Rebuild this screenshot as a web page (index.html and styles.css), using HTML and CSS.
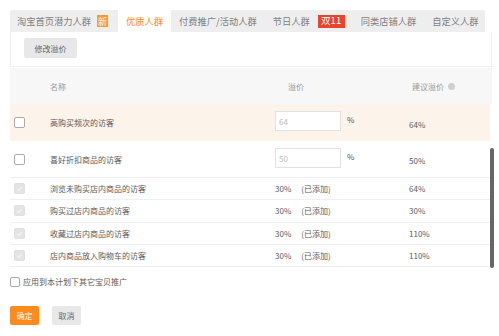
FILE: index.html
```html
<!DOCTYPE html>
<html>
<head>
<meta charset="utf-8">
<link rel="stylesheet" href="styles.css">
</head>
<body>
<div class="page">
  <div class="tabs">
    <div class="tab first">淘宝首页潜力人群<span class="badge new">新</span></div>
    <div class="tab active">优质人群</div>
    <div class="tab">付费推广/活动人群</div>
    <div class="tab">节日人群<span class="badge hot">双11</span></div>
    <div class="tab">同类店铺人群</div>
    <div class="tab">自定义人群</div>
  </div>
  <div class="toolbar"><span class="btn btn-gray">修改溢价</span></div>

  <div class="table">
    <div class="row head">
      <div></div>
      <div class="c-name">名称</div>
      <div class="c-price">溢价</div>
      <div class="c-sug">建议溢价<span class="qicon"></span></div>
    </div>
    <div class="row big hl">
      <div class="c-check"><span class="cb"></span></div>
      <div class="c-name">高购买频次的访客</div>
      <div class="c-price edit"><span class="inp">64</span><span class="pct">%</span></div>
      <div class="c-sug low">64%</div>
    </div>
    <div class="row big">
      <div class="c-check"><span class="cb"></span></div>
      <div class="c-name">喜好折扣商品的访客</div>
      <div class="c-price edit"><span class="inp">50</span><span class="pct">%</span></div>
      <div class="c-sug low">50%</div>
    </div>
    <div class="row small">
      <div class="c-check"><span class="cb dis"><svg viewBox="0 0 10 10"><path d="M2.5 5.2l1.8 1.8 3.4-3.6" /></svg></span></div>
      <div class="c-name">浏览未购买店内商品的访客</div>
      <div class="c-price"><span class="v">30%</span><span class="added">(已添加)</span></div>
      <div class="c-sug">64%</div>
    </div>
    <div class="row small">
      <div class="c-check"><span class="cb dis"><svg viewBox="0 0 10 10"><path d="M2.5 5.2l1.8 1.8 3.4-3.6" /></svg></span></div>
      <div class="c-name">购买过店内商品的访客</div>
      <div class="c-price"><span class="v">30%</span><span class="added">(已添加)</span></div>
      <div class="c-sug">30%</div>
    </div>
    <div class="row small">
      <div class="c-check"><span class="cb dis"><svg viewBox="0 0 10 10"><path d="M2.5 5.2l1.8 1.8 3.4-3.6" /></svg></span></div>
      <div class="c-name">收藏过店内商品的访客</div>
      <div class="c-price"><span class="v">30%</span><span class="added">(已添加)</span></div>
      <div class="c-sug">110%</div>
    </div>
    <div class="row small">
      <div class="c-check"><span class="cb dis"><svg viewBox="0 0 10 10"><path d="M2.5 5.2l1.8 1.8 3.4-3.6" /></svg></span></div>
      <div class="c-name">店内商品放入购物车的访客</div>
      <div class="c-price"><span class="v">30%</span><span class="added">(已添加)</span></div>
      <div class="c-sug">110%</div>
    </div>
    <div class="scrollbar"></div>
  </div>

  <div class="apply"><span class="cb"></span><span>应用到本计划下其它宝贝推广</span></div>

  <div class="actions">
    <span class="btn btn-orange">确定</span>
    <span class="btn btn-gray">取消</span>
  </div>
</div>
</body>
</html>
```

FILE: styles.css
```css
* { box-sizing: border-box; }
html, body { margin: 0; padding: 0; background: #fff; }
body {
  font-family: "Noto Sans CJK SC", "Noto Sans", sans-serif;
  font-size: 8px;
  color: #5a5a5a;
  width: 499px;
  height: 336px;
  overflow: hidden;
}
.page { padding: 10px 0 0 10px; }

.tabs {
  display: flex;
  width: 475px;
  height: 22px;
  background: #eeeeee;
  border-radius: 2px 2px 0 0;
}
.tab {
  display: flex;
  align-items: center;
  padding: 0 8px;
  font-size: 9.25px;
  color: #808080;
  white-space: nowrap;
}
.tab.first { padding-left: 7px; padding-right: 10px; }
.tab.active { background: #fff; color: #ff8a2a; }
.badge {
  display: inline-flex;
  align-items: center;
  justify-content: center;
  color: #fff;
  margin-left: 6px;
  height: 12px;
  font-size: 9px;
  line-height: 1;
}
.badge.new { background: #ff9a35; width: 11px; }
.badge.hot { background: #e8462c; width: 27px; margin-left: 8px; height: 13px; font-size: 9.5px; }

.toolbar {
  width: 482px;
  height: 35px;
  border: 1px solid #eeeeee;
  border-top: none;
  padding: 6px 0 0 13px;
}
.btn {
  display: inline-flex;
  align-items: center;
  justify-content: center;
  height: 20px;
  border-radius: 2px;
  font-size: 8px;
}
.btn-gray { background: #e8e8e8; color: #666; }
.toolbar .btn { width: 53px; }

.table {
  position: relative;
  margin-top: 1px;
  width: 482px;
}
.row {
  display: grid;
  grid-template-columns: 38px 227px 133px 1fr;
  align-items: center;
  border-bottom: 1px solid #f0f0f0;
  width: 480px;
}
.row.head { height: 36px; background: #f7f7f7; color: #999; border-bottom: none; width: 482px; }
.row.big { height: 37px; }
.row.small { height: 22.3px; }
.row.hl { background: #fcf3ea; border-bottom: none; }
.c-check { padding-left: 4px; display: flex; align-items: center; }
.c-name { padding-left: 2px; }
.head .c-price { padding-left: 13px; }
.head .c-sug { padding-left: 4px; display: flex; align-items: center; }
.qicon {
  display: inline-block;
  width: 7px; height: 7px;
  border-radius: 50%;
  background: #d0d0d0;
  margin-left: 4px;
}
.c-sug { padding-left: 1px; }
.c-sug.low { padding-top: 3px; }

.cb {
  display: inline-block;
  width: 11px; height: 11px;
  border: 1px solid #aaa;
  border-radius: 2px;
  background: #fff;
}
.cb.dis { background: #e4e4e4; border-color: #e0e0e0; }
.cb svg { display: block; width: 9px; height: 9px; }
.cb svg path { fill: none; stroke: #f4f4f4; stroke-width: 1.3; }

.edit { display: flex; align-items: flex-start; align-self: start; margin-top: 7px; }
.inp {
  display: flex;
  align-items: center;
  width: 66px;
  height: 20px;
  border: 1px solid #e2e2e2;
  background: #fff;
  color: #bbb;
  padding-left: 3px;
}
.pct { margin-left: 6px; margin-top: 3px; color: #555; }
.added { margin-left: 10px; }

.scrollbar {
  position: absolute;
  left: 480px;
  top: 80px;
  width: 4px;
  height: 120px;
  background: #666;
  border-radius: 2px;
}

.apply {
  display: flex;
  align-items: center;
  gap: 3px;
  margin-top: 9px;
  height: 11px;
}
.apply .cb { width: 10px; height: 10px; border-color: #aaa; }

.actions {
  display: flex;
  gap: 13px;
  margin-top: 19px;
}
.actions .btn { width: 29px; height: 19px; }
.btn-orange { background: #ff8a1e; color: #fff; }
```
